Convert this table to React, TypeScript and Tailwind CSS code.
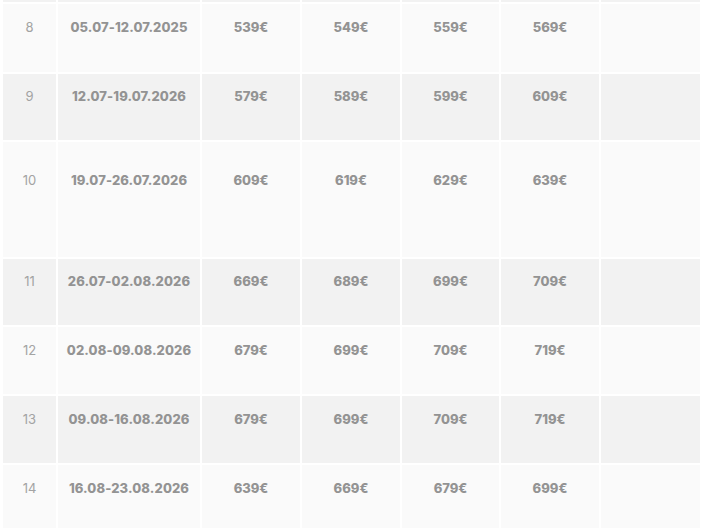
const rows = [
  { n: 8, dates: "05.07-12.07.2025", prices: ["539€", "549€", "559€", "569€"], h: "h-[68px]", pt: "pt-[13px]" },
  { n: 9, dates: "12.07-19.07.2026", prices: ["579€", "589€", "599€", "609€"], h: "h-[66px]", pt: "pt-[12px]" },
  { n: 10, dates: "19.07-26.07.2026", prices: ["609€", "619€", "629€", "639€"], h: "h-[115px]", pt: "pt-[28px]" },
  { n: 11, dates: "26.07-02.08.2026", prices: ["669€", "689€", "699€", "709€"], h: "h-[66px]", pt: "pt-[12px]" },
  { n: 12, dates: "02.08-09.08.2026", prices: ["679€", "699€", "709€", "719€"], h: "h-[67px]", pt: "pt-[13px]" },
  { n: 13, dates: "09.08-16.08.2026", prices: ["679€", "699€", "709€", "719€"], h: "h-[67px]", pt: "pt-[13px]" },
  { n: 14, dates: "16.08-23.08.2026", prices: ["639€", "669€", "679€", "699€"], h: "h-[68px]", pt: "pt-[13px]" },
];

const cols = "grid grid-cols-[53px_142px_98px_98px_97px_98px_99px] gap-[2px]";

export default function App() {
  return (
    <div className="h-[528px] w-[703px] overflow-hidden bg-white font-['Inter','Liberation_Sans',sans-serif] text-[13px] leading-5 text-[#939393]">
      <div className="ml-[3px] flex flex-col gap-[2px]">
        {/* tail of the row above, scrolled out of view */}
        <div className={`${cols} h-[2px]`}>
          {Array.from({ length: 7 }).map((_, k) => (
            <div key={k} className="bg-[#f2f2f2]"></div>
          ))}
        </div>
        {rows.map((r, i) => {
          const bg = i % 2 === 0 ? "bg-[#fafafa]" : "bg-[#f2f2f2]";
          const cell = `${bg} ${r.pt} text-center`;
          return (
            <div key={r.n} className={`${cols} ${r.h}`}>
              <div className={`${cell} font-normal text-[#a3a3a3]`}>{r.n}</div>
              <div className={`${cell} font-extrabold tracking-[0.1px]`}>{r.dates}</div>
              {r.prices.map((p, j) => (
                <div key={j} className={`${cell} font-extrabold`}>
                  {p}
                </div>
              ))}
              <div className={cell}></div>
            </div>
          );
        })}
      </div>
    </div>
  );
}
